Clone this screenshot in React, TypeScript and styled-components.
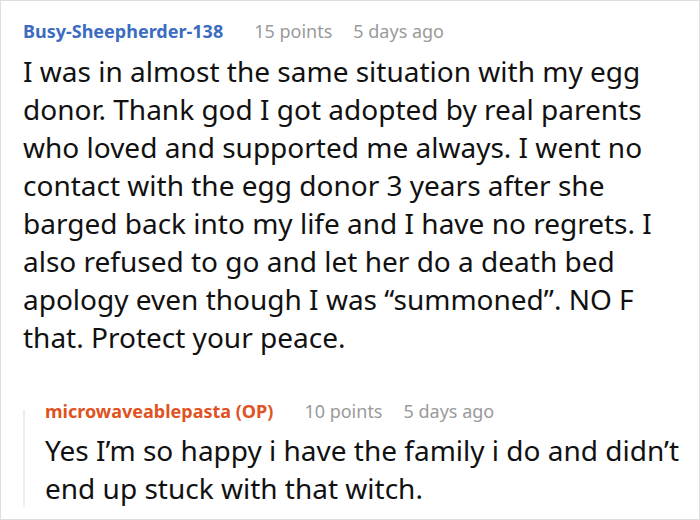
import React from 'react';
import styled, { createGlobalStyle } from 'styled-components';

const GlobalStyle = createGlobalStyle`
    html, body {
        margin: 0;
        padding: 0;
        background: #fff;
    }
    body {
        font-family: "Noto Sans", "Open Sans", sans-serif;
    }
`;

const Frame = styled.div`
    box-sizing: border-box;
    width: 700px;
    height: 520px;
    border: 1px solid #dedede;
    padding: 18px 16px 0 22px;
    overflow: hidden;
`;

const Meta = styled.div<{ $nested?: boolean }>`
    display: flex;
    align-items: baseline;
    gap: 21px;
    font-size: 18px;
    line-height: 24px;
    margin-top: ${props => (props.$nested ? '-11px' : '0')};
`;

const Author = styled.span<{ $op?: boolean }>`
    font-weight: 700;
    color: ${props => (props.$op ? '#e0521f' : '#3b6cc0')};
    margin-right: 10px;
`;

const Stat = styled.span`
    color: #9a9a9a;
`;

const Body = styled.p`
    margin: 0;
    font-size: 28px;
    line-height: 38px;
    color: #111;
`;

const Comment = styled.div`
    display: flex;
    flex-direction: column;
    gap: 9px;
`;

const Reply = styled.div`
    margin-top: 54px;
    display: flex;
    flex-direction: column;
    gap: 8px;
    border-left: 2px solid #eeeeee;
    padding-left: 20px;
`;

interface CommentData {
    author: string;
    op?: boolean;
    points: number;
    ago: string;
    text: string;
}

const main: CommentData = {
    author: 'Busy-Sheepherder-138',
    points: 15,
    ago: '5 days ago',
    text: 'I was in almost the same situation with my egg donor. Thank god I got adopted by real parents who loved and supported me always. I went no contact with the egg donor 3 years after she barged back into my life and I have no regrets. I also refused to go and let her do a death bed apology even though I was \u201csummoned\u201d. NO F that. Protect your peace.',
};

const reply: CommentData = {
    author: 'microwaveablepasta (OP)',
    op: true,
    points: 10,
    ago: '5 days ago',
    text: 'Yes I\u2019m so happy i have the family i do and didn\u2019t end up stuck with that witch.',
};

function Header({ data, nested }: { data: CommentData; nested?: boolean }) {
    return (
        <Meta $nested={nested}>
            <Author $op={data.op}>{data.author}</Author>
            <Stat>{data.points} points</Stat>
            <Stat>{data.ago}</Stat>
        </Meta>
    );
}

const App = () => {
    return (
        <>
            <GlobalStyle />
            <Frame>
                <Comment>
                    <Header data={main} />
                    <Body>{main.text}</Body>
                </Comment>
                <Reply>
                    <Header data={reply} nested />
                    <Body>{reply.text}</Body>
                </Reply>
            </Frame>
        </>
    );
};

export default App;
